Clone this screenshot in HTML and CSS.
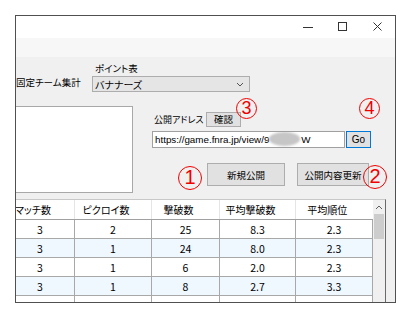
FILE: index.html
```html
<!DOCTYPE html>
<html lang="ja">
<head>
    <meta charset="UTF-8">
    <title>公開設定</title>
    <link rel="stylesheet" href="styles.css">
</head>
<body>
    <div class="window">
        <div class="titlebar">
            <span class="caption-btn">
                <svg width="12" height="12" viewBox="0 0 12 12"><path d="M1 6.5h10" stroke="#333" stroke-width="1"/></svg>
            </span>
            <span class="caption-btn">
                <svg width="12" height="12" viewBox="0 0 12 12"><rect x="1.5" y="1.5" width="8" height="8" fill="none" stroke="#333" stroke-width="1"/></svg>
            </span>
            <span class="caption-btn">
                <svg width="12" height="12" viewBox="0 0 12 12"><path d="M1.5 1.5l8 8M9.5 1.5l-8 8" stroke="#333" stroke-width="1"/></svg>
            </span>
        </div>
        <div class="menubar"></div>

        <div class="content">
            <div class="top">
                <div class="team-label">固定チーム集計</div>
                <div class="point-group">
                    <div class="field-label">ポイント表</div>
                    <div class="combo">
                        <span>バナナーズ</span>
                        <svg width="8" height="5" viewBox="0 0 8 5"><path d="M1 1l3 3 3-3" fill="none" stroke="#555" stroke-width="1"/></svg>
                    </div>
                </div>
            </div>

            <div class="middle">
                <div class="log-box"></div>
                <div class="publish">
                    <div class="addr-row">
                        <span class="addr-label">公開アドレス</span>
                        <span class="btn btn-small">確認</span>
                    </div>
                    <div class="url-row">
                        <div class="url-box">https://game.fnra.jp/view/9<span class="masked"></span>W</div>
                        <span class="btn btn-go">Go</span>
                    </div>
                    <div class="action-row">
                        <span class="btn btn-new">新規公開</span>
                        <span class="btn btn-update">公開内容更新</span>
                    </div>
                </div>
            </div>

            <div class="grid">
                <table class="stats">
                    <colgroup>
                        <col class="c1"><col class="c2"><col class="c3"><col class="c4"><col class="c5">
                    </colgroup>
                    <thead>
                        <tr><th>マッチ数</th><th>ピクロイ数</th><th>撃破数</th><th>平均撃破数</th><th>平均順位</th></tr>
                    </thead>
                    <tbody>
                        <tr><td>3</td><td>2</td><td>25</td><td>8.3</td><td>2.3</td></tr>
                        <tr class="alt"><td>3</td><td>1</td><td>24</td><td>8.0</td><td>2.3</td></tr>
                        <tr><td>3</td><td>1</td><td>6</td><td>2.0</td><td>2.3</td></tr>
                        <tr class="alt"><td>3</td><td>1</td><td>8</td><td>2.7</td><td>3.3</td></tr>
                        <tr><td></td><td></td><td></td><td></td><td></td></tr>
                    </tbody>
                </table>
                <div class="vscroll">
                    <svg class="arrow-up" width="8" height="5" viewBox="0 0 8 5"><path d="M1 4l3-3 3 3" fill="none" stroke="#606060" stroke-width="1"/></svg>
                    <div class="thumb"></div>
                </div>
            </div>
        </div>

        <!-- 説明用の番号 -->
        <span class="mark mark-1">1</span>
        <span class="mark mark-2">2</span>
        <span class="mark mark-3 mark-sm">3</span>
        <span class="mark mark-4 mark-sm">4</span>
    </div>
</body>
</html>
```

FILE: styles.css
```css
body {
    margin: 0;
    padding: 15px 0 0 15px;
    background: #ffffff;
    font-family: "Noto Sans CJK JP", "Noto Sans", sans-serif;
    font-feature-settings: "palt";
    font-size: 9.5px;
    color: #000;
    white-space: nowrap;
}
.window {
    position: relative;
    width: 381px;
    height: 288px;
    box-sizing: border-box;
    border: 1px solid #505050;
    background: #f0f0f0;
    overflow: hidden;
}
.titlebar {
    height: 22px;
    background: #ffffff;
    display: flex;
    justify-content: flex-end;
}
.caption-btn {
    width: 35px;
    display: flex;
    align-items: center;
    justify-content: center;
}
.menubar {
    height: 19px;
    background: #f7f7f7;
}
.content {
    height: 245px;
    overflow: hidden;
}

/* 上段 */
.top {
    display: flex;
    height: 49px;
}
.team-label {
    width: 76px;
    padding-top: 18px;
    line-height: 14px;
}
.point-group {
    padding-top: 4px;
}
.field-label {
    line-height: 15px;
    padding-left: 3px;
}
.combo {
    width: 158px;
    height: 16px;
    box-sizing: border-box;
    border: 1px solid #adadad;
    background: #e5e5e5;
    display: flex;
    align-items: center;
    justify-content: space-between;
    padding: 0 5px 0 2px;
    font-size: 10px;
}

/* 中段 */
.middle {
    display: flex;
    height: 87px;
}
.log-box {
    width: 118px;
    height: 87px;
    box-sizing: border-box;
    margin-left: -1px;
    background: #ffffff;
    border: 1px solid #a8a8a8;
}
.publish {
    margin-left: 19px;
    width: 219px;
}
.addr-row {
    margin-top: 6px;
    display: flex;
    align-items: center;
    height: 14px;
}
.addr-label {
    width: 52px;
    padding-left: 2px;
    font-size: 9px;
}
.btn {
    display: flex;
    align-items: center;
    justify-content: center;
    box-sizing: border-box;
    border: 1px solid #adadad;
    background: #e1e1e1;
}
.btn-small {
    width: 35px;
    height: 15px;
}
.url-row {
    margin-top: 5px;
    display: flex;
    height: 17px;
}
.url-box {
    width: 193px;
    height: 17px;
    box-sizing: border-box;
    border: 1px solid #a0a0a0;
    background: #ffffff;
    padding-left: 2px;
    font-family: "Liberation Sans", sans-serif;
    font-size: 9.8px;
    line-height: 15px;
    overflow: hidden;
}
.masked {
    display: inline-block;
    width: 31px;
    height: 14px;
    margin: 0 1px -3px 0;
    border-radius: 50%;
    background: #c6c6c6;
    filter: blur(1px);
}
.btn-go {
    margin-left: 1px;
    width: 25px;
    height: 17px;
    border-color: #0078d7;
    font-family: "Liberation Sans", sans-serif;
    font-size: 10px;
}
.action-row {
    margin-top: 15px;
    display: flex;
    height: 23px;
}
.btn-new {
    margin-left: 55px;
    width: 78px;
}
.btn-update {
    margin-left: 12px;
    width: 72px;
}

/* 集計表 */
.grid {
    margin-top: 6px;
    margin-left: -11px;
    display: flex;
    width: 380px;
    height: 110px;
    border-right: 1px solid #6a6a6a;
    border-top: 1px solid #c8c8c8;
    background: #ffffff;
}
.stats {
    width: 367px;
    border-collapse: collapse;
    table-layout: fixed;
    font-size: 10px;
}
.c1 { width: 69px; }
.c2 { width: 77px; }
.c3 { width: 68px; }
.c4 { width: 76px; }
.c5 { width: 77px; }
.stats th {
    height: 19px;
    padding: 0 14px 0 0;
    font-weight: normal;
    text-align: center;
    border-left: 1px solid #e5e5e5;
    border-bottom: 1px solid #a0a0a0;
    background: #ffffff;
}
.stats td {
    height: 18px;
    padding: 0;
    text-align: center;
    font-size: 10.5px;
    border: 1px solid #a8a8a8;
    border-top: none;
}
.stats tr.alt td {
    background: #eff7ff;
}
.vscroll {
    width: 12px;
    background: #f0f0f0;
    display: flex;
    flex-direction: column;
    align-items: center;
}
.arrow-up {
    margin-top: 5px;
}
.thumb {
    margin-top: 4px;
    width: 10px;
    height: 25px;
    background: #cdcdcd;
}

/* 赤丸の番号 */
.mark {
    position: absolute;
    width: 24px;
    height: 24px;
    box-sizing: border-box;
    border: 1.6px solid #f00000;
    border-radius: 50%;
    color: #f00000;
    font-family: "Liberation Sans", sans-serif;
    font-size: 20px;
    line-height: 21px;
    text-align: center;
}
.mark-sm {
    width: 21px;
    height: 21px;
    font-size: 18px;
    line-height: 18px;
}
.mark-1 { left: 162px; top: 150px; }
.mark-2 { left: 347px; top: 149px; }
.mark-3 { left: 220px; top: 82px; }
.mark-4 { left: 343px; top: 82px; }
```
